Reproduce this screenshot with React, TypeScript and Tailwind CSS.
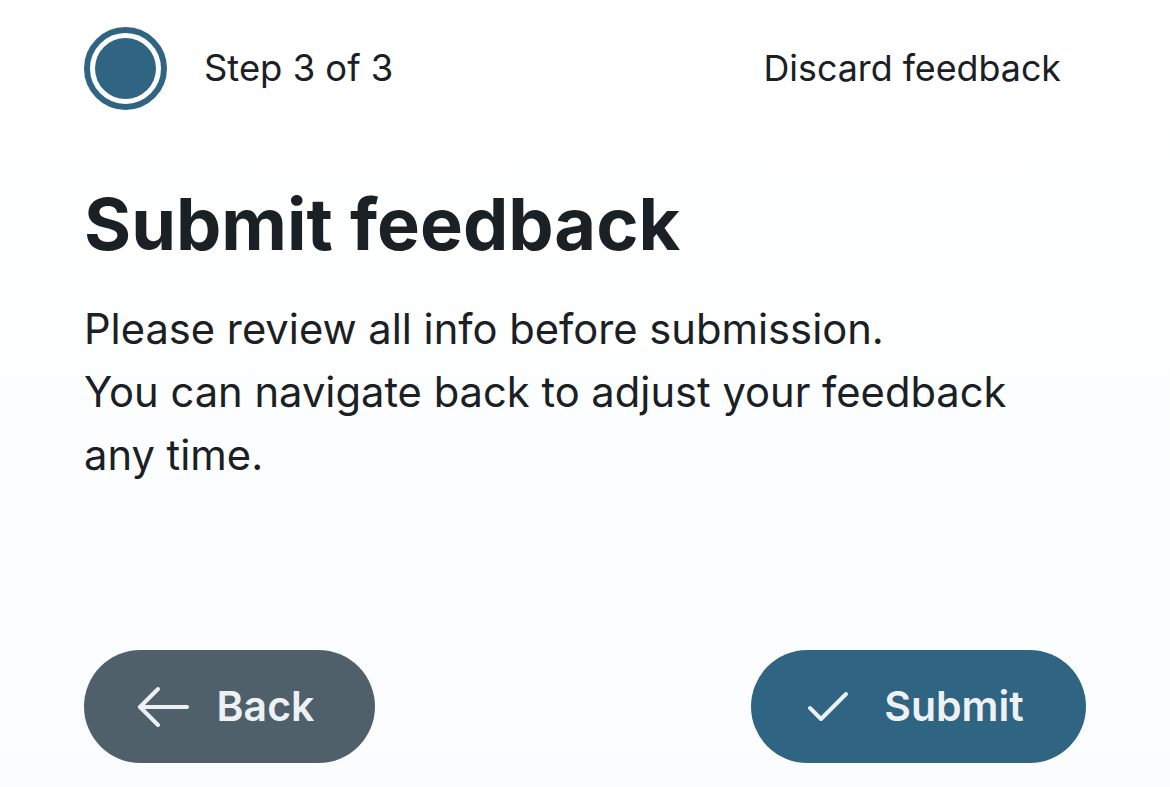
import React from 'react';

const ArrowLeft = () => (
  <svg width="52" height="42" viewBox="0 0 52 42" fill="none" stroke="currentColor" strokeWidth="4" strokeLinecap="round" strokeLinejoin="round">
    <path d="M50 21H3" />
    <path d="M21 3L3 21l18 18" />
  </svg>
);

const Check = () => (
  <svg width="42" height="32" viewBox="0 0 42 32" fill="none" stroke="currentColor" strokeWidth="4" strokeLinecap="round" strokeLinejoin="round">
    <path d="M3 17l11 11L39 3" />
  </svg>
);

export default function App() {
  return (
    <div
      className="w-[1170px] h-[787px] bg-gradient-to-b from-white to-[#fafcfd] text-[#1a2024] flex flex-col px-[84px] overflow-hidden"
      style={{ fontFamily: 'Inter, "Noto Sans", sans-serif' }}
    >
      {/* header */}
      <div className="flex items-center justify-between pt-[27px]">
        <div className="flex items-center gap-[37px]">
          <div className="w-[83px] h-[83px] rounded-full border-[6px] border-[#2f6583] p-[5px]">
            <div className="w-full h-full rounded-full bg-[#2f6583]" />
          </div>
          <span className="text-[36.4px] leading-none">Step 3 of 3</span>
        </div>
        <button className="text-[35.8px] leading-none mr-[25px]">Discard feedback</button>
      </div>

      {/* content */}
      <h1 className="mt-[78px] text-[72px] font-bold leading-none">Submit feedback</h1>
      <p className="mt-[38px] text-[41.7px] leading-[63px]">
        Please review all info before submission.
        <br />
        You can navigate back to adjust your feedback any time.
      </p>

      <div className="flex-1" />

      {/* actions */}
      <div className="flex items-center justify-between pb-[24px]">
        <button className="h-[113px] w-[291px] pr-[8px] rounded-full bg-[#4f606b] text-[#eef1f3] flex items-center justify-center gap-[28px] text-[41px] font-semibold">
          <ArrowLeft />
          <span>Back</span>
        </button>
        <button className="h-[113px] w-[335px] pr-[6px] rounded-full bg-[#2f6482] text-[#eef1f3] flex items-center justify-center gap-[35px] text-[41px] font-semibold">
          <Check />
          <span>Submit</span>
        </button>
      </div>
    </div>
  );
}
